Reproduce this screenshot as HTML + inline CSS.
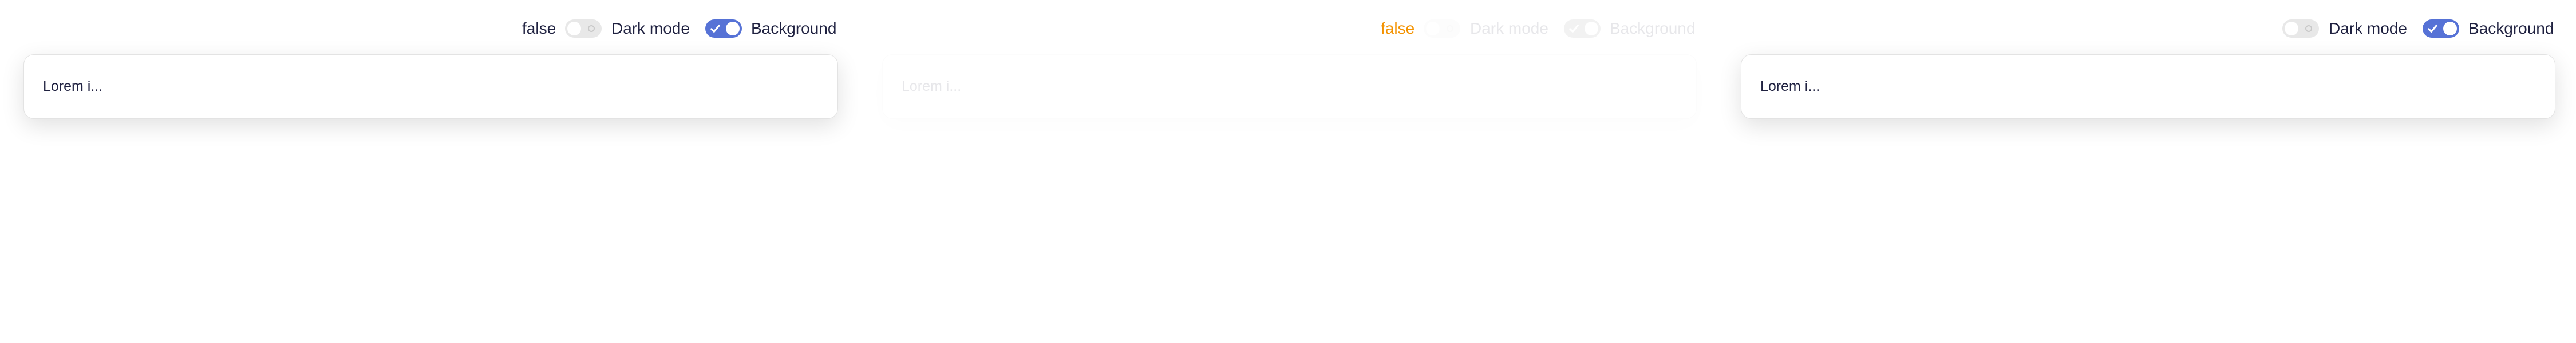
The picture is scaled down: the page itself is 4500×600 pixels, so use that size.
<!DOCTYPE html>
<html><head><meta charset="utf-8"><style>
*{box-sizing:border-box;margin:0;padding:0}
body{width:4500px;height:600px;background:#fff;font-family:"Liberation Sans",sans-serif;color:#1f2140;position:relative;overflow:hidden}
.panel{position:absolute;top:0;width:1500px;height:600px}
.lbl{position:absolute;top:25px;font-size:28px;line-height:50px;white-space:nowrap}
.tg{position:absolute;top:34px;width:64px;height:32px;border-radius:16px}
.off{background:#e8e8e8}
.off .k{position:absolute;left:4px;top:4px;width:24px;height:24px;border-radius:50%;background:#fff}
.off .r{position:absolute;left:40px;top:10px;width:12px;height:12px;border-radius:50%;border:2px solid #c8c8c8}
.on{background:#5672d6}
.on .k{position:absolute;right:4px;top:4px;width:24px;height:24px;border-radius:50%;background:#fff}
.on svg{position:absolute;left:8px;top:7px}
.card{position:absolute;left:41px;top:95px;width:1423px;height:113px;border:1.5px solid #e3e3e3;border-radius:18px;background:#fff;box-shadow:0 12px 40px rgba(0,0,0,.12)}
.card span{position:absolute;left:33px;top:38px;font-size:25px;line-height:34px}
.fade{opacity:.1}
</style></head><body>
<div class="panel" style="left:0">
  <div class="lbl" style="left:912px">false</div>
  <div class="tg off" style="left:987px"><div class="k"></div><div class="r"></div></div>
  <div class="lbl" style="left:1068px">Dark mode</div>
  <div class="tg on" style="left:1232px"><svg width="20" height="18" viewBox="0 0 22 20"><path d="M3 11l5 5 10-12" fill="none" stroke="#fff" stroke-width="3.5" stroke-linecap="round" stroke-linejoin="round"/></svg><div class="k"></div></div>
  <div class="lbl" style="left:1312px">Background</div>
  <div class="card"><span>Lorem i...</span></div>
</div>
<div class="panel" style="left:1500px">
  <div class="lbl" style="left:912px;color:#f39200">false</div>
  <div class="fade">
  <div class="tg off" style="left:987px"><div class="k"></div><div class="r"></div></div>
  <div class="lbl" style="left:1068px">Dark mode</div>
  <div class="tg" style="left:1232px;background:#888"><svg style="position:absolute;left:8px;top:7px" width="20" height="18" viewBox="0 0 22 20"><path d="M3 11l5 5 10-12" fill="none" stroke="#fff" stroke-width="3.5" stroke-linecap="round" stroke-linejoin="round"/></svg><div style="position:absolute;right:4px;top:4px;width:24px;height:24px;border-radius:50%;background:#fff"></div></div>
  <div class="lbl" style="left:1312px">Background</div>
  <div class="card"><span>Lorem i...</span></div>
  </div>
</div>
<div class="panel" style="left:3000px">
  <div class="tg off" style="left:987px"><div class="k"></div><div class="r"></div></div>
  <div class="lbl" style="left:1068px">Dark mode</div>
  <div class="tg on" style="left:1232px"><svg width="20" height="18" viewBox="0 0 22 20"><path d="M3 11l5 5 10-12" fill="none" stroke="#fff" stroke-width="3.5" stroke-linecap="round" stroke-linejoin="round"/></svg><div class="k"></div></div>
  <div class="lbl" style="left:1312px">Background</div>
  <div class="card"><span>Lorem i...</span></div>
</div>
</body></html>
